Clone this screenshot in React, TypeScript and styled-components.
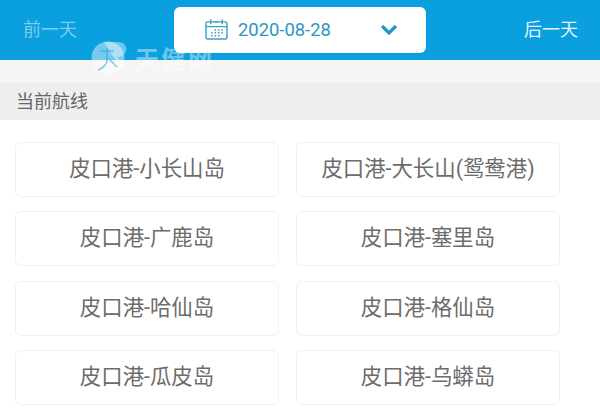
import styled, { createGlobalStyle } from "styled-components";

const routes = [
  "皮口港-小长山岛",
  "皮口港-大长山(鸳鸯港)",
  "皮口港-广鹿岛",
  "皮口港-塞里岛",
  "皮口港-哈仙岛",
  "皮口港-格仙岛",
  "皮口港-瓜皮岛",
  "皮口港-乌蟒岛",
];

export default function App() {
  return (
    <>
      <GlobalStyle />
      <Page>
        <TopBar>
          <DayLink $dim>前一天</DayLink>
          <DatePicker>
            <svg width="23" height="21" viewBox="0 0 24 22" fill="none" stroke="#3f9fc6" strokeWidth="1.5">
              <rect x="1" y="3" width="22" height="18" rx="1.5" />
              <path d="M1 8h22M6 0.5v5M18 0.5v5M10 3h4" />
              <path d="M10 11.5h1.6M13.5 11.5h1.6M17 11.5h1.6M6.5 14.5h1.6M10 14.5h1.6M13.5 14.5h1.6M17 14.5h1.6M6.5 17.5h1.6M10 17.5h1.6M13.5 17.5h1.6" strokeWidth="1.6" />
            </svg>
            <DateText>2020-08-28</DateText>
            <svg width="18" height="12" viewBox="0 0 18 12" fill="none" stroke="#1f97c6" strokeWidth="3.2">
              <path d="M2 2l7 7 7-7" />
            </svg>
          </DatePicker>
          <DayLink>后一天</DayLink>
        </TopBar>
        <Spacer />
        <SectionTitle>当前航线</SectionTitle>
        <RouteGrid>
          {routes.map((route) => (
            <RouteCard key={route}>{route}</RouteCard>
          ))}
        </RouteGrid>
        <Watermark>
          <svg width="40" height="34" viewBox="0 0 40 34">
            <circle cx="18" cy="17" r="16.5" fill="#fff" opacity="0.45" />
            <path d="M14 1h14c8 0 10 7 7 11-2 3-5 4-8 4l10 12-6-3-9-11" fill="#fff" opacity="0.4" />
            <path d="M10 10h14M17 7v12c0 5-4 8-9 10M19 18l8 8" fill="none" stroke="#0a9fdf" strokeOpacity="0.5" strokeWidth="1.6" />
          </svg>
          <WatermarkText>天健网</WatermarkText>
        </Watermark>
      </Page>
    </>
  );
}

const GlobalStyle = createGlobalStyle`
  html, body {
    margin: 0;
    padding: 0;
    background: #fff;
  }
`;

const Page = styled.div`
  position: relative;
  display: flex;
  flex-direction: column;
  width: 600px;
  height: 420px;
  overflow: hidden;
  background: #fff;
  font-family: "Roboto", "Noto Sans CJK SC", sans-serif;
`;

const TopBar = styled.header`
  display: flex;
  align-items: center;
  justify-content: space-between;
  height: 60px;
  padding: 0 22px 0 23px;
  box-sizing: border-box;
  background: #0a9fdf;
`;

const DayLink = styled.span<{ $dim?: boolean }>`
  font-size: 18px;
  margin-top: -5px;
  color: ${(p) => (p.$dim ? "#7fcdec" : "#e4f5fc")};
`;

const DatePicker = styled.div`
  display: flex;
  align-items: center;
  box-sizing: border-box;
  width: 252px;
  height: 46px;
  margin: -1px 0 0 -1px;
  padding: 0 28px 0 31px;
  background: #fff;
  border-radius: 6px;
`;

const DateText = styled.span`
  flex: 1;
  margin-left: 10px;
  font-size: 18.4px;
  color: #2f96bf;
`;

const Spacer = styled.div`
  height: 23px;
  background: #f5f5f5;
`;

const SectionTitle = styled.div`
  display: flex;
  align-items: center;
  height: 37px;
  padding: 0 0 4px 16px;
  box-sizing: border-box;
  background: #eeeeee;
  font-size: 18px;
  color: #666;
`;

const RouteGrid = styled.div`
  display: grid;
  grid-template-columns: 264px 264px;
  grid-auto-rows: 55px;
  column-gap: 17px;
  row-gap: 14.3px;
  padding: 22px 0 0 15px;
`;

const RouteCard = styled.div`
  display: flex;
  align-items: center;
  justify-content: center;
  box-sizing: border-box;
  padding-bottom: 6px;
  border: 1px solid #f0f0f0;
  border-radius: 6px;
  font-size: 21.4px;
  color: #6c6c6c;
`;

const Watermark = styled.div`
  position: absolute;
  left: 90px;
  top: 40px;
  display: flex;
  align-items: center;
  gap: 5px;
`;

const WatermarkText = styled.span`
  font-size: 24px;
  font-weight: 700;
  letter-spacing: 2.5px;
  color: rgba(255, 255, 255, 0.42);
`;
